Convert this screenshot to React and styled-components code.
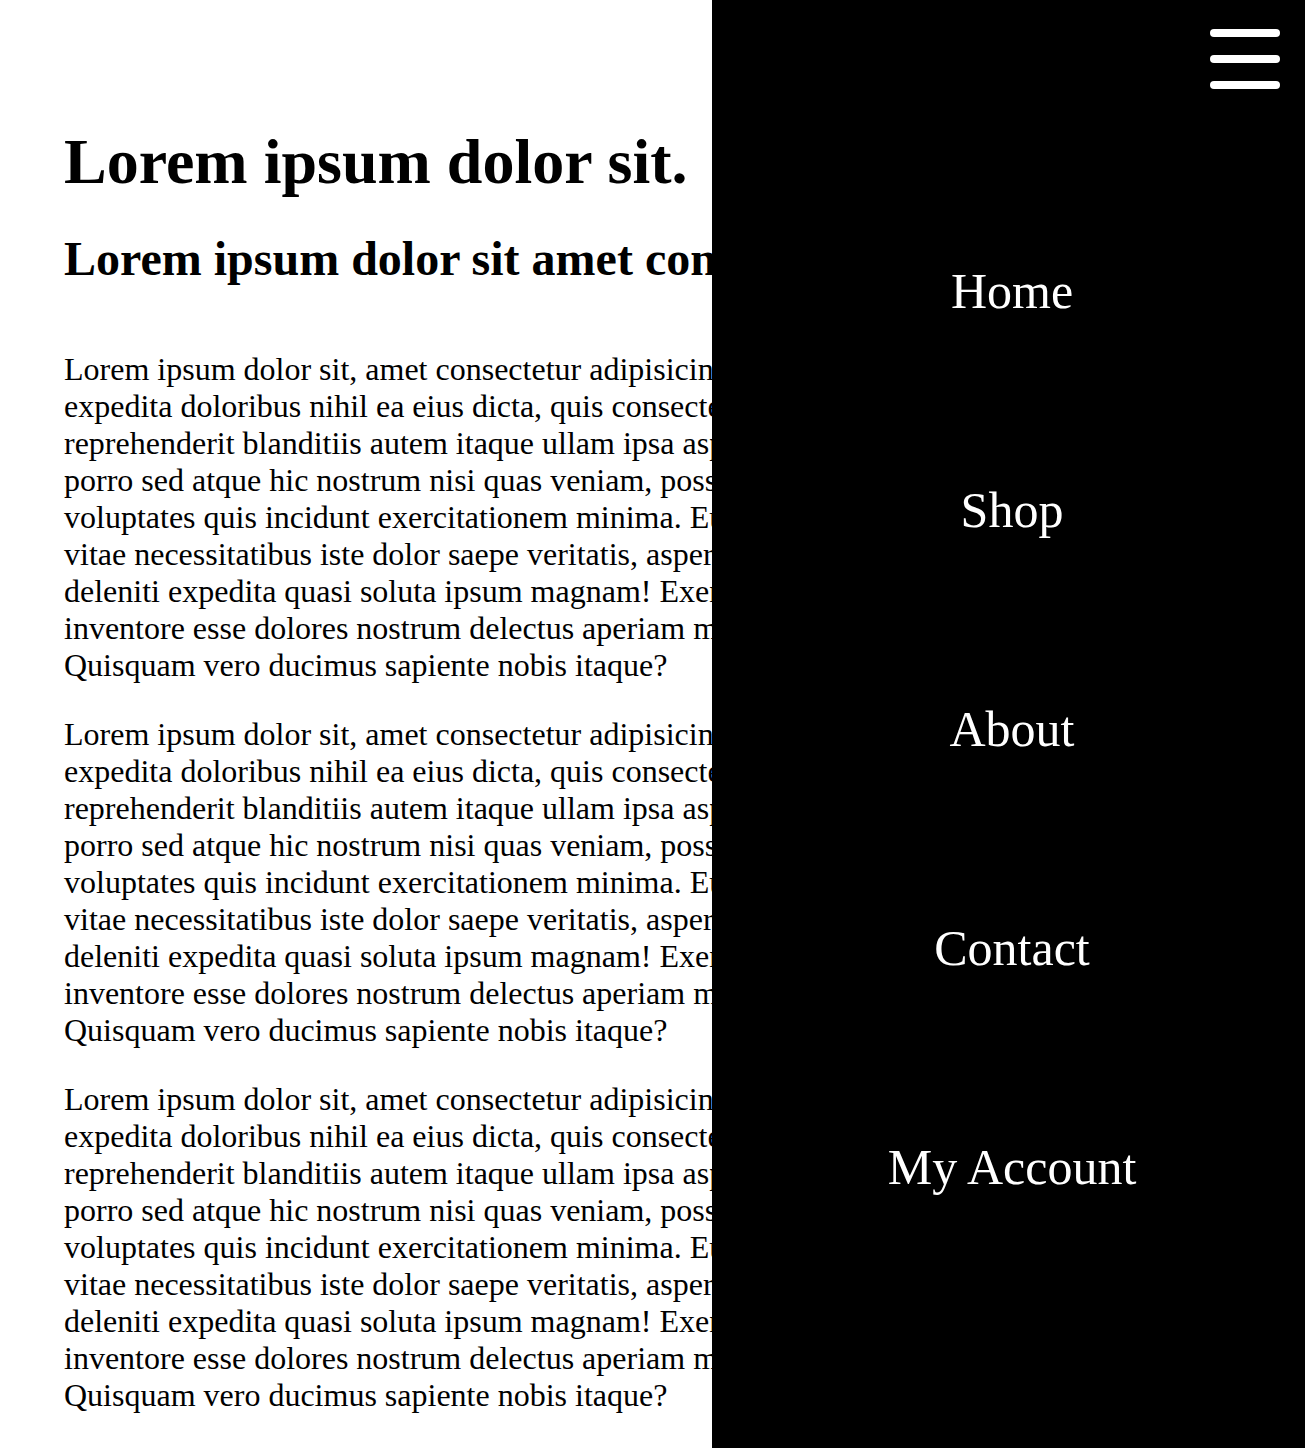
import React from "react";
import styled, { createGlobalStyle } from "styled-components";

const GlobalStyle = createGlobalStyle`
  * {
    box-sizing: border-box;
  }
  body {
    margin: 0;
    background: #fff;
    color: #000;
    font-family: "Liberation Serif", "Times New Roman", serif;
    overflow-x: hidden;
  }
`;

const lines = [
  "Lorem ipsum dolor sit, amet consectetur adipisicing elit. Dolorum, nobis",
  "expedita doloribus nihil ea eius dicta, quis consectetur sunt odio iure",
  "reprehenderit blanditiis autem itaque ullam ipsa aspernatur dolorem",
  "porro sed atque hic nostrum nisi quas veniam, possimus laborum",
  "voluptates quis incidunt exercitationem minima. Eum quibusdam",
  "vitae necessitatibus iste dolor saepe veritatis, asperiores nam",
  "deleniti expedita quasi soluta ipsum magnam! Exercitationem illo",
  "inventore esse dolores nostrum delectus aperiam molestiae fugit.",
  "Quisquam vero ducimus sapiente nobis itaque?",
];

const links = ["Home", "Shop", "About", "Contact", "My Account"];

const App = () => {
  return (
    <>
      <GlobalStyle />
      <Main>
        <h1>Lorem ipsum dolor sit.</h1>
        <h2>Lorem ipsum dolor sit amet consectetur adipisicing elit.</h2>
        {[0, 1, 2].map((n) => (
          <p key={n}>
            {lines.map((line, i) => (
              <React.Fragment key={i}>
                {line}
                {i < lines.length - 1 && <br />}
              </React.Fragment>
            ))}
          </p>
        ))}
      </Main>
      <Menu>
        <Burger aria-label="menu">
          <span />
          <span />
          <span />
        </Burger>
        <NavList>
          {links.map((link) => (
            <li key={link}>
              <a href="#">{link}</a>
            </li>
          ))}
        </NavList>
      </Menu>
    </>
  );
};

const Main = styled.main`
  padding: 125px 64px 0;
  h1 {
    margin: 0 0 32px;
    font-size: 64px;
    font-weight: 700;
  }
  h2 {
    margin: 0 0 65px;
    font-size: 48px;
    font-weight: 700;
    white-space: nowrap;
    overflow: hidden;
  }
  p {
    margin: 0 0 32px;
    font-size: 32px;
  }
`;

const Menu = styled.nav`
  position: fixed;
  top: 0;
  right: 0;
  width: 593px;
  height: 100vh;
  background: #000;
  padding: 10px 0 0 7px;
  display: flex;
  flex-direction: column;
  justify-content: center;
`;

const Burger = styled.button`
  position: absolute;
  top: 29px;
  right: 25px;
  width: 70px;
  padding: 0;
  border: none;
  background: none;
  display: flex;
  flex-direction: column;
  gap: 18px;
  cursor: pointer;
  span {
    display: block;
    height: 8px;
    border-radius: 4px;
    background: #fff;
  }
`;

const NavList = styled.ul`
  list-style: none;
  margin: 0;
  padding: 0;
  display: flex;
  flex-direction: column;
  gap: 161px;
  text-align: center;
  li a {
    color: #fff;
    text-decoration: none;
    font-size: 50px;
  }
`;

export default App;
